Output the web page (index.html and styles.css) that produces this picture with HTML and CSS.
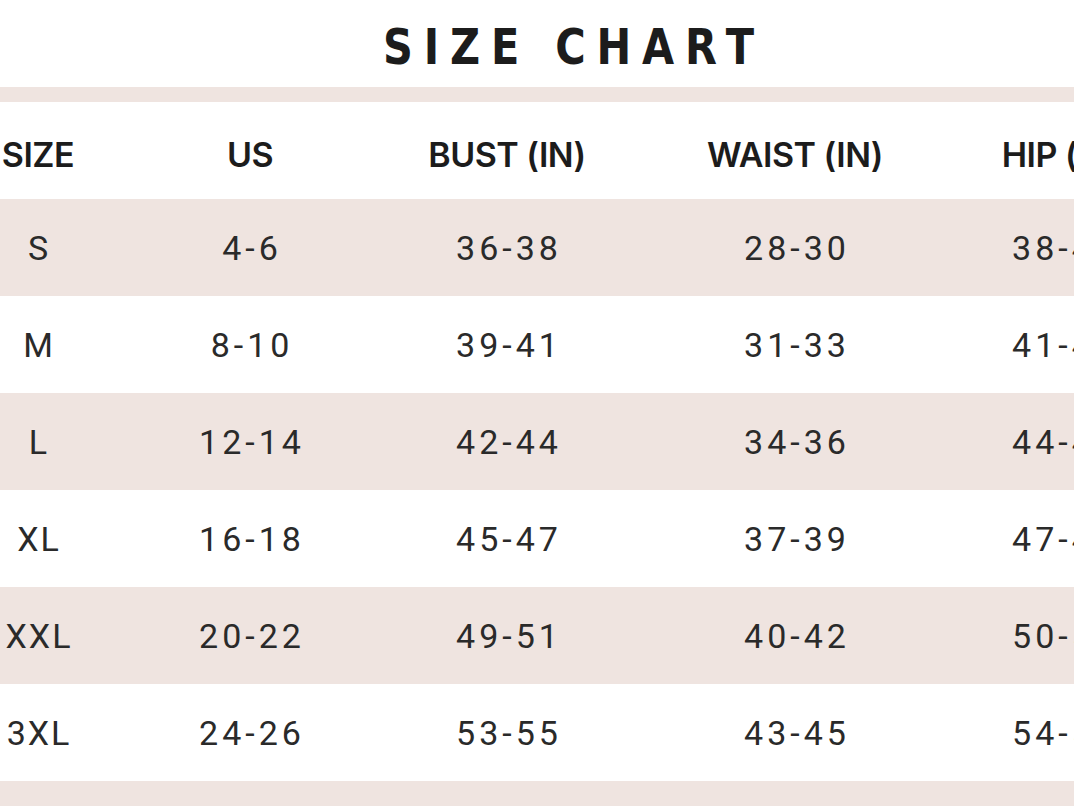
FILE: index.html
```html
<!DOCTYPE html>
<html lang="en">
<head>
<meta charset="utf-8">
<title>Size Chart</title>
<link rel="stylesheet" href="styles.css">
</head>
<body>
<div class="page">
  <h1 class="title"><span class="title-text">SIZE CHART</span></h1>
  <div class="band"></div>
  <div class="chart">
    <div class="row head">
      <div class="cell">SIZE</div>
      <div class="cell">US</div>
      <div class="cell">BUST (IN)</div>
      <div class="cell">WAIST (IN)</div>
      <div class="cell">HIP (IN)</div>
    </div>
    <div class="row pink">
      <div class="cell size">S</div>
      <div class="cell">4-6</div>
      <div class="cell">36-38</div>
      <div class="cell">28-30</div>
      <div class="cell">38-40</div>
    </div>
    <div class="row">
      <div class="cell size">M</div>
      <div class="cell">8-10</div>
      <div class="cell">39-41</div>
      <div class="cell">31-33</div>
      <div class="cell">41-43</div>
    </div>
    <div class="row pink">
      <div class="cell size">L</div>
      <div class="cell">12-14</div>
      <div class="cell">42-44</div>
      <div class="cell">34-36</div>
      <div class="cell">44-46</div>
    </div>
    <div class="row">
      <div class="cell size">XL</div>
      <div class="cell">16-18</div>
      <div class="cell">45-47</div>
      <div class="cell">37-39</div>
      <div class="cell">47-49</div>
    </div>
    <div class="row pink">
      <div class="cell size">XXL</div>
      <div class="cell">20-22</div>
      <div class="cell">49-51</div>
      <div class="cell">40-42</div>
      <div class="cell">50-52</div>
    </div>
    <div class="row">
      <div class="cell size">3XL</div>
      <div class="cell">24-26</div>
      <div class="cell">53-55</div>
      <div class="cell">43-45</div>
      <div class="cell">54-56</div>
    </div>
  </div>
  <div class="band bottom"></div>
</div>
</body>
</html>
```

FILE: styles.css
```css
html, body {
  margin: 0;
  padding: 0;
  background: #ffffff;
}

body {
  overflow: hidden;
  width: 1074px;
  height: 806px;
}

.page {
  display: flex;
  flex-direction: column;
  width: 1074px;
}

.title {
  margin: 0;
  height: 87px;
  display: flex;
  align-items: center;
  justify-content: center;
  padding-left: 74px;
  padding-top: 7px;
  box-sizing: border-box;
  font-family: "DejaVu Sans", sans-serif;
  font-weight: 700;
  font-size: 50px;
  line-height: 1;
  color: #1c1c1c;
}

.title-text {
  display: inline-block;
  letter-spacing: 13px;
  transform: scaleX(0.83);
}

.band {
  height: 15px;
  background: #efe4e0;
}

.band.bottom {
  height: 30px;
}

.chart {
  display: flex;
  flex-direction: column;
}

.row {
  display: grid;
  grid-template-columns: 76px 348px 166px 410px 126px;
  height: 97px;
  align-items: center;
  font-family: Roboto, "Liberation Sans", sans-serif;
  font-size: 34px;
  letter-spacing: 4px;
  color: #2a2a2a;
  background: #ffffff;
}

.row.pink {
  background: #efe4e0;
}

.row.head {
  font-family: Inter, "Liberation Sans", sans-serif;
  font-weight: 600;
  font-size: 34px;
  letter-spacing: -0.5px;
  color: #1c1c1c;
  padding-top: 8px;
  box-sizing: border-box;
}

.cell {
  display: flex;
  justify-content: center;
  white-space: nowrap;
}

.row .cell {
  padding-left: 4px;
}

.row .cell.size {
  letter-spacing: 2px;
  padding-left: 2px;
}

.row.head .cell {
  padding-left: 0;
}
```
